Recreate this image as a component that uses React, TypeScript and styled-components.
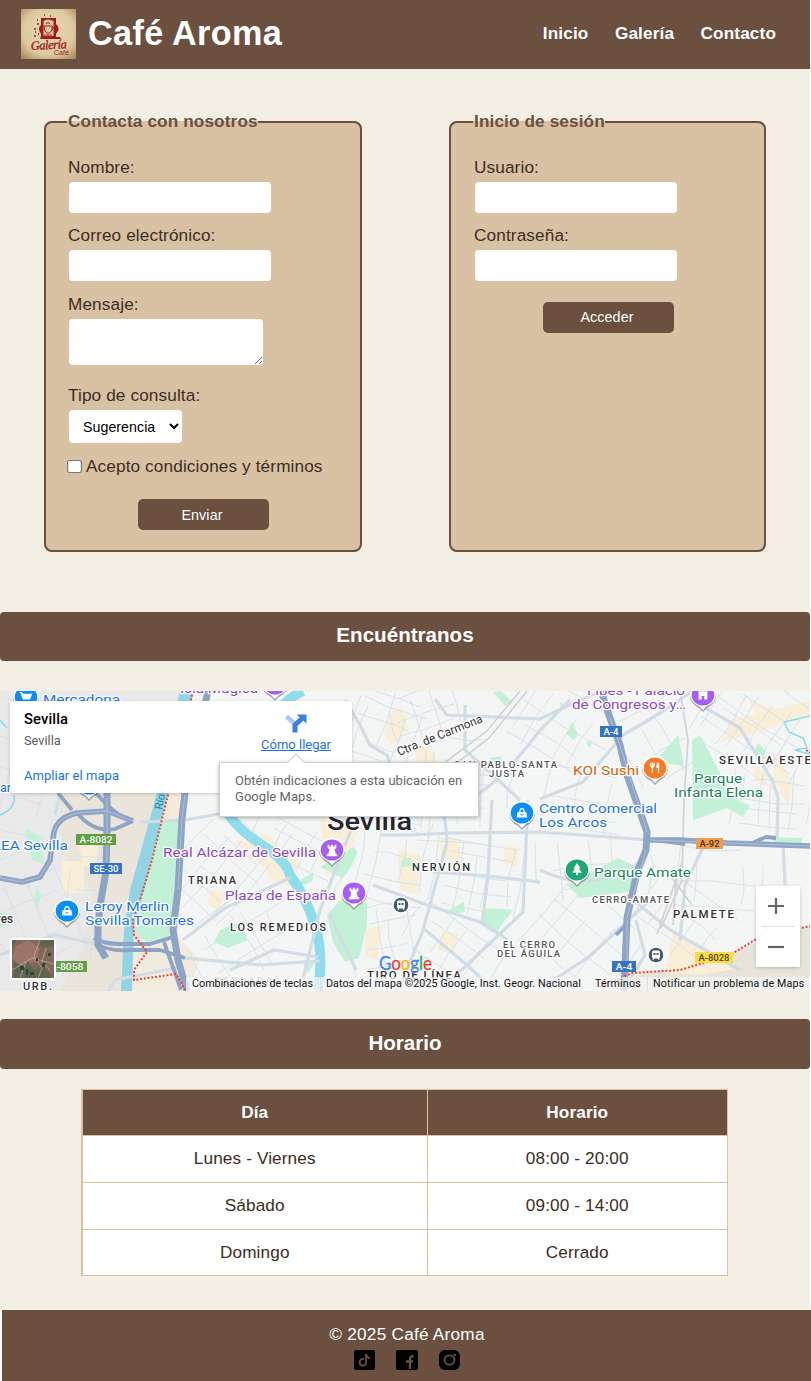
import React from "react";
import styled, { createGlobalStyle } from "styled-components";

const c = {
  brown: "#6b4f3f",
  tan: "#d9c2a3",
  cream: "#f4efe4",
  ink: "#3e2c23",
};

const GlobalStyle = createGlobalStyle`
  *, *::before, *::after { box-sizing: border-box; }
  body {
    margin: 0;
    background: #fff;
    color: ${c.ink};
    font-family: "Liberation Sans", Arial, sans-serif;
    font-size: 17.2px;
    letter-spacing: 0.12px;
    line-height: 18px;
  }
`;

const Page = styled.div`
  display: flex;
  flex-direction: column;
  width: 810px;
  height: 1381px;
  background: ${c.cream};
`;

const Header = styled.header`
  display: flex;
  align-items: center;
  justify-content: space-between;
  height: 69px;
  padding: 0 34px 1px 21px;
  background: ${c.brown};
  color: #fff;
`;

const Brand = styled.div`
  display: flex;
  align-items: center;
  gap: 12px;
  svg { display: block; }
`;

const BrandName = styled.h1`
  margin: 0 0 3px;
  font-size: 34.2px;
  line-height: 38px;
  letter-spacing: 0.35px;
`;

const Nav = styled.nav`
  display: flex;
  gap: 26.5px;
  margin-top: -2px;
`;

const NavLink = styled.a`
  color: #fff;
  font-weight: bold;
  text-decoration: none;
`;

const Forms = styled.main`
  display: flex;
  justify-content: space-between;
  height: 543px;
  padding: 43px 44px 60px;
`;

const Panel = styled.fieldset<{ $w: number; $inset: number }>`
  width: ${(p) => p.$w}px;
  min-width: 0;
  height: 440px;
  margin: 0;
  padding: 26px 21px 0 ${(p) => p.$inset}px;
  background: ${c.tan};
  border: 2px solid ${c.brown};
  border-radius: 8px;
`;

const Legend = styled.legend`
  padding: 0 0 2px 1px;
  color: ${c.brown};
  font-weight: bold;
`;

const Field = styled.label<{ $gap?: number }>`
  display: flex;
  flex-direction: column;
  align-items: flex-start;
  gap: 5.6px;
  margin-bottom: ${(p) => p.$gap ?? 13.8}px;
  padding-left: 1px;
`;

const Input = styled.input`
  width: 202px;
  height: 31px;
  margin-left: 1px;
  padding: 0 8px;
  border: 0;
  border-radius: 4px;
  background: #fff;
`;

const TextArea = styled.textarea`
  width: 194px;
  height: 46px;
  margin: 0.5px 0 0 1px;
  padding: 8px;
  border: 0;
  border-radius: 4px;
  background: #fff;
`;

const Select = styled.select`
  width: 113px;
  height: 33px;
  margin: 0.4px 0 0 1px;
  padding: 0 0 0 10px;
  border: 0;
  border-radius: 4px;
  background: #fff;
  color: #000;
  font: 14.2px "Liberation Sans", Arial, sans-serif;
  letter-spacing: 0.05px;
`;

const Check = styled.label`
  display: flex;
  align-items: center;
  gap: 5px;
  padding-left: 1px;
  white-space: nowrap;
  input { width: 13px; height: 13px; margin: 0; transform: scaleX(1.15); }
`;

const Button = styled.button<{ $top: number }>`
  display: block;
  width: 131px;
  height: 31px;
  margin: ${(p) => p.$top}px auto 0;
  padding: 0 8px 0 6px;
  border: 0;
  border-radius: 5px;
  background: ${c.brown};
  color: #fff;
  font: 14.3px "Liberation Sans", Arial, sans-serif;
  letter-spacing: 0.1px;
`;

const SectionTitle = styled.h2<{ $h?: number }>`
  display: flex;
  align-items: center;
  justify-content: center;
  height: ${(p) => p.$h ?? 49}px;
  margin: 0;
  padding-bottom: 3px;
  border-radius: 4px;
  background: ${c.brown};
  color: #fff;
  font-size: 20.6px;
  letter-spacing: 0;
`;

const MapFrame = styled.section`
  position: relative;
  height: 300px;
  margin: 30px 0 28px;
  overflow: hidden;
  font-family: Roboto, sans-serif;
  letter-spacing: 0;
  > svg { display: block; }
`;

const InfoCard = styled.div`
  position: absolute;
  left: 10px;
  top: 10px;
  display: flex;
  justify-content: space-between;
  width: 342px;
  height: 92px;
  padding: 9px 21px 0 14px;
  background: #fff;
  border-radius: 2px;
  box-shadow: 0 1px 4px -1px rgba(0, 0, 0, 0.3);
`;

const Place = styled.div`
  display: flex;
  flex-direction: column;
  font-size: 12.8px;
  line-height: 18px;
  color: #5b5b5b;
  strong { font-size: 14.8px; font-weight: 500; color: #000; letter-spacing: 0.1px; }
  span { margin-top: 4px; }
  a { margin-top: 17px; color: #1a73e8; font-size: 13px; letter-spacing: 0.05px; }
`;

const Directions = styled.a`
  display: flex;
  flex-direction: column;
  align-items: center;
  color: #1a73e8;
  font-size: 13px;
  line-height: 18px;
  text-decoration: underline;
  svg { margin: 4px 0 3px; }
`;

const Tooltip = styled.div`
  position: absolute;
  left: 219px;
  top: 71px;
  width: 260px;
  height: 55px;
  padding: 10px 15px;
  background: #fff;
  border: 1px solid #cfcfcf;
  box-shadow: 0 1px 4px rgba(0, 0, 0, 0.3);
  color: #666;
  font-size: 13px;
  line-height: 16px;
  letter-spacing: 0.04px;
  white-space: nowrap;
  &::before {
    content: "";
    position: absolute;
    left: 70px;
    top: -7px;
    width: 12px;
    height: 12px;
    background: #fff;
    border: 1px solid #cfcfcf;
    border-width: 1px 0 0 1px;
    transform: rotate(45deg);
  }
`;

const Zoom = styled.div`
  position: absolute;
  left: 756px;
  top: 195px;
  display: flex;
  flex-direction: column;
  width: 44px;
  height: 81px;
  background: #fff;
  box-shadow: 0 1px 4px -1px rgba(0, 0, 0, 0.35);
`;

const ZoomButton = styled.button`
  flex: 1;
  display: grid;
  place-items: center;
  margin: 0 5px;
  padding: 0 4px 0 0;
  border: 0;
  background: none;
  & + & { border-top: 1px solid #e2e2e2; }
`;

const Attribution = styled.div`
  position: absolute;
  right: 0;
  bottom: 0;
  display: flex;
  align-items: center;
  height: 14px;
  padding-right: 6px;
  background: rgba(245, 245, 245, 0.74);
  color: #111;
  font-size: 10.7px;
  line-height: 14px;
  white-space: nowrap;
`;

const Credit = styled.span<{ $w: number; $ls?: number; $line?: boolean }>`
  width: ${(p) => p.$w}px;
  padding-left: ${(p) => (p.$line ? 5 : 6)}px;
  letter-spacing: ${(p) => p.$ls ?? 0.05}px;
  border-left: ${(p) => (p.$line ? "1px solid #ddd" : "0")};
`;

const Schedule = styled.table`
  width: 647px;
  margin: 20px 0 0 81px;
  border-collapse: collapse;
  table-layout: fixed;
  background: #fff;
  text-align: center;
  td, th { padding: 0 0 2px; height: 47px; border: 1px solid ${c.tan}; }
  th { height: 46px; background: ${c.brown}; color: #fff; }
  tr:last-child td { height: 46px; }
  td:first-child, th:first-child { width: 345px; border-left-width: 2px; }
`;

const Footer = styled.footer`
  display: flex;
  flex-direction: column;
  align-items: center;
  gap: 7px;
  width: 811px;
  height: 71px;
  margin-top: auto;
  padding: 15px 0 0 1px;
  background: ${c.brown};
  border-left: 2px solid #fff;
  color: #fff;
  letter-spacing: 0.25px;
`;

const Social = styled.div`
  display: flex;
  gap: 21px;
  svg { display: block; }
`;

const Logo = () => (
  <svg width="55" height="50" viewBox="0 0 55 50">
    <defs>
      <radialGradient id="paper" cx=".5" cy=".45" r=".72">
        <stop offset="0" stopColor="#e9dbb9" />
        <stop offset=".65" stopColor="#dcc9a0" />
        <stop offset="1" stopColor="#a9885c" />
      </radialGradient>
    </defs>
    <rect width="55" height="50" fill="url(#paper)" />
    <path d="M20 9h15v19h4l1 2H19l1-3z" fill="#a3191c" />
    <path d="M20 16q-4 3 0 9M35 15q5 4 0 10" fill="#a3191c" />
    <path d="M22.500 12q4-3 10 0v15h-10z" fill="#ddcaa2" />
    <path d="M23 17h8v4q-4 6-7 1zM31 18q3 0 0 3M25 15q2-3 4 0M23 26h8" fill="none" stroke="#a3191c" strokeWidth="1" />
    <path d="M23 6h1M29 7h1M16 15h2M13 20h2M14 23h1M17 25h1M13 27h2M16 11h1" stroke="#a3191c" strokeWidth="1.500" />
    <text x="10" y="40" fill="#a3191c" fontFamily="Liberation Serif, serif" fontStyle="italic" fontSize="12.500" letterSpacing="0" textLength="36" stroke="#a3191c" strokeWidth=".35" transform="rotate(-3 28 40)">Galería</text>
    <text x="33" y="46" fill="#a3191c" fontFamily="Liberation Sans, sans-serif" fontSize="7" letterSpacing="0" textLength="15">Café</text>
  </svg>
);

type Pt = [number, number];

/* Irregular street grids, one per district: centre, half size, angle, spacing. */
const districts: [number, number, number, number, number, number][] = [
  [25, 770, 50, 70, 15, 34], [25, 915, 60, 60, -22, 27], [85, 900, 20, 60, 6, 24],
  [215, 880, 38, 60, 42, 18], [250, 940, 55, 34, -32, 23], [298, 850, 45, 25, 28, 18],
  [385, 730, 40, 38, 20, 17], [425, 720, 35, 30, -18, 22], [395, 860, 40, 45, 12, 21],
  [460, 800, 45, 55, 4, 23], [480, 880, 45, 40, 10, 18], [390, 940, 35, 40, -10, 21],
  [460, 955, 55, 30, 35, 23], [560, 730, 50, 40, 32, 26], [570, 800, 55, 34, 10, 28],
  [585, 865, 50, 32, -6, 28], [580, 940, 50, 45, 40, 24], [660, 740, 38, 40, -30, 26],
  [755, 730, 60, 45, 33, 16], [770, 800, 40, 34, 6, 15], [710, 880, 65, 35, 4, 30],
  [690, 930, 55, 38, 36, 26],
];

const streetPath = () => {
  let seed = 7;
  const rnd = () => {
    seed = (seed * 16807) % 2147483647;
    return seed / 2147483647 - 0.5;
  };
  let d = "";
  districts.forEach(([cx, cy, w, h, deg, gap]) => {
    const a = (deg * Math.PI) / 180;
    const put = (x: number, y: number): Pt => [
      Math.round(cx + x * Math.cos(a) - y * Math.sin(a)),
      Math.round(cy + x * Math.sin(a) + y * Math.cos(a)),
    ];
    for (let x = -w; x <= w; x += gap) {
      const j = rnd() * gap * 0.7;
      d += `M${put(x + j, -h * (0.7 + rnd() * 0.6))}L${put(x + j + rnd() * 6, rnd() * 20)}L${put(x + j, h * (0.7 + rnd() * 0.6))}`;
    }
    for (let y = -h; y <= h; y += gap) {
      const j = rnd() * gap * 0.7;
      d += `M${put(-w * (0.7 + rnd() * 0.6), y + j)}L${put(rnd() * 20, y + j + rnd() * 6)}L${put(w * (0.7 + rnd() * 0.6), y + j)}`;
    }
  });
  return d;
};
const streets = streetPath();

type LabelProps = { x: number; y: number; w?: number; s?: number; fill?: string; weight?: number; children: string; rot?: number; spaced?: boolean };
const Label = ({ x, y, w, s = 13.7, fill = "#1a73e8", weight = 400, rot, spaced, children }: LabelProps) => (
  <text x={x} y={y} textLength={w} lengthAdjust={spaced ? "spacing" : "spacingAndGlyphs"} fontSize={s} fill={fill} fontWeight={weight} stroke="#fff" strokeWidth="2.500"
    strokeLinejoin="round" paintOrder="stroke" transform={rot ? `rotate(${rot} ${x} ${y})` : undefined}>{children}</text>
);

const Shield = ({ x, y, w, fill, ink = "#fff", children }: { x: number; y: number; w: number; fill: string; ink?: string; children: string }) => (
  <g>
    <rect x={x} y={y} width={w} height="11" fill={fill} />
    <text x={x + w / 2} y={y + 9} textAnchor="middle" textLength={w - 7} lengthAdjust="spacingAndGlyphs" fontSize="9.500" fontWeight="500" fill={ink}>{children}</text>
  </g>
);

const glyphs: Record<string, React.ReactNode> = {
  cart: <path d="M-7-5h2l1 2h10l-2 5h-7l-2-5M-3 5h1M3 5h1" fill="#fff" stroke="#fff" strokeWidth="1.500" />,
  bag: <><path d="M-5-1h10l1 6H-6z" fill="#fff" /><path d="M-2.500-1q0-4 2.500-4t2.500 4" fill="none" stroke="#fff" strokeWidth="1.400" /><path d="M-2 1.500q2 2 4 0" fill="none" stroke="#0b8ff5" /></>,
  tower: <path d="M-5-6h2v2h2v-2h2v2h2v-2h2v4l-2 1 1 5 2 1v2H-6v-2l2-1 1-5-2-1z" fill="#fff" />,
  gate: <path d="M-5-5h2v1h2v-2h2v2h2v-1h2V5H1.500V1h-3v4H-5z" fill="#fff" />,
  fork: <path d="M-5-6v3q0 2 2 2.500v6M-1-6v3q0 2-2 2.500M-3-6v5M4-6v12M3.500-6q-2 3-1 6" fill="none" stroke="#fff" strokeWidth="1.500" />,
  tree: <path d="M0-8l4 6H2l3.500 5H1v3h-2V3h-4.500l3.500-5h-2z" fill="#fff" />,
};

const Pin = ({ x, y, fill, glyph }: { x: number; y: number; fill: string; glyph: string }) => (
  <g transform={`translate(${x} ${y})`}>
    <path d="M-13 1A13 12.500 0 1 1 13 1Q12 8 4 12L0 16-4 12Q-12 8-13 1z" fill="#666" opacity=".55" transform="translate(0 1)" />
    <path d="M-13 0A13 12.500 0 1 1 13 0Q12 8 4 11L0 15-4 11Q-12 8-13 0z" fill="#fff" />
    <ellipse rx="11.300" ry="10.500" fill={fill} />
    <g transform="scale(.88)">{glyphs[glyph]}</g>
  </g>
);

const Station = ({ x, y }: { x: number; y: number }) => (
  <g transform={`translate(${x} ${y})`}>
    <circle r="8.500" fill="#fff" />
    <circle r="7.300" fill="#455a72" />
    <rect x="-4" y="-4.500" width="8" height="8" rx="1.500" fill="#fff" />
    <path d="M-2.500-2h2v2h-2zM.5-2h2v2h-2z" fill="#455a72" />
    <path d="M-3 5l1-2M3 5l-1-2" stroke="#fff" />
  </g>
);

const CityMap = () => (
  <svg width="810" height="300" viewBox="0 691 810 300" fontFamily="Roboto, sans-serif">
    <rect y="691" width="810" height="300" fill="#f4f5f5" />
    <path d="M0 691H190L150 830 128 991H0z" fill="#e9e9e9" />
    <path d="M60 793H182L176 991H60L82 950 92 890 62 850z" fill="#e9e5da" />
    <path d="M135 940L176 935 200 960 188 991H130z" fill="#f2ecdf" />
    <path d="M170 793h14l-4 26-24 5z" fill="#f5ebda" />
    <path d="M600 991L645 972 700 965 750 945 770 935 811 926V991z" fill="#e8e4da" />
    <g fill="#f9efd9">
      <path d="M665 973l8-40 30 12 30 24-30 6z" />
      <path d="M245 843l20-10 35 30-8 25-20-8z M235 840l26 4-10 18z M320 820l40 5-10 30-25 5z M330 855l25-8 0 20-30 8z" />
      <path d="M387 715l14-8 8 22-14 16-10-6z M415 745l18 4 7 20-24-2z M398 850l26 6-8 38-16-4z M440 837l20 2v22l-18-2z M365 930l18-6-6 36-12-4z M290 700l16 30-10 12z" />
      <path d="M720 742l10-22 82-20v14l-60 20z M772 750l20 30-4 26-12-22z M755 765l12 10-2 12-12-8z M748 700l26 8 6 16-22-6z" />
      <path d="M62 861h22v32H62z M46 700l16 8-4 18z M78 845l20-4-2 26H84z M210 890l15 4-6 16-12-5z M442 930l16 4-4 20-16-4z M505 845l14 3-2 18-14-2z" />
    </g>
    <path d={streets} fill="none" stroke="#d3dee7" strokeWidth=".85" />
    <g fill="#c3f1d7">
      <path d="M160 822L180 817 178 852 173 918 167 938 147 942 135 932 138 912z" />
      <path d="M327 915L342 898 367 903 367 925 359 958 345 962 333 942z M320 867L353 847 358 852 348 872 343 878z M402 860l8-3 2 9-11 1z" />
      <path d="M485 908l28 2-18 24-14-9z M449 910l15-8 1 10-10 2z M300 880l14-8-2 10-12 4z M493 692l8-1 12 12-8 3z M490 758l12-2-4 10z" />
      <path d="M700 735L725 783 740 802 750 805 743 817 727 808 705 816 693 820 692 740z M678 735L655 762 684 766z M567 885L618 858 637 867 628 892 580 898z" />
      <path d="M572 722l6 12-4 6-8-6z M586 742l6-2-2 8z M560 702l6 4-5 5z M770 837l32 1v5l-28-1z M758 743l8 8-3 6-10-4z" />
      <path d="M220 930l20-8 8 18-20 8-14-6z M25 828l14 8 5 28-12-4z M36 889l6 4-5 14-3-6z M302 960l12 3-6 10z M0 912l12 2-2 12H0z" />
    </g>
    <path d="M180 691L157 793 130 890 124 930 121 991H132L134 925 145 885 168 793 194 691z" fill="#92d4e6" />
    <path d="M303 691Q290 697 282 706M227 812Q238 830 262 845T290 875Q306 897 315 925T318 991" fill="none" stroke="#8fdcec" strokeWidth="10" />
    <path d="M810 716l-26 6 5 10 14 6 4 10-12 2 14 4M0 815q16-6 14-20M0 720l7 8" fill="none" stroke="#86dcec" strokeWidth="1.500" />
    <g fill="none" stroke="#d2dce5" strokeWidth="3.200">
      <path d="M345 700L360 725 370 745 387 755 395 780M380 835L410 835 450 833 540 832 650 840M351 830L320 910 300 991M373 885L427 905 483 923 508 940M433 775Q450 830 446 846L423 930 398 991M423 928L467 965 492 988" />
      <path d="M433 872L488 876 540 882M492 800L488 875 482 925M528 800L523 912 467 965 440 988M449 800Q480 810 540 730L570 700M435 699L447 715 540 719 600 691M465 705V750L520 800M540 799L583 782 623 735 673 705 692 691M692 700L740 728 773 782 778 798 777 838M783 842L785 885M540 870Q580 890 628 872L647 855" />
      <path d="M318 957L274 950 230 970M183 940L225 908 290 878M185 958L260 965 320 961M330 915L356 970M140 822L185 820 230 812M540 989L590 956 650 900M627 895L670 930 740 970M98 945L55 935 0 955M108 991L115 980 180 967M55 815L60 795M636 920L645 955 627 985M704 845L685 885 680 940" />
    </g>
    <path d="M527 691L489 738 422 790M520 691L487 731 420 781M680 691L688 740 684 800 682 880 661 928M683 860L657 934M676 880L673 925M670 875L692 905" stroke="#cfd2d7" strokeWidth="1.700" fill="none" />
    <g fill="none" stroke="#8ea4c5" strokeWidth="7" strokeLinejoin="round">
      <path d="M208 691L185 793 182 818 178 890 173 930 178 960 187 991M107 793L107 830 106 872 101 900 98 925 98 945 106 958M601 691L610 718 620 745 627 775 647 832 646 850 637 872 627 918 624 991" />
      <path d="M0 878L22 882 40 877 50 860 54 832Q58 817 77 813L107 811 133 821M647 840L680 840 727 843 811 846" strokeWidth="5.500" />
      <path d="M77 813Q94 833 115 829L133 821M96 793Q110 810 126 819M58 793L72 810M94 938Q104 944 120 944L150 944 173 937M95 943Q109 952 130 950L160 950 185 958M164 942L181 990M618 730L622 758M626 925L616 935M655 840L685 844M750 844L766 837 776 838" strokeWidth="3.800" />
    </g>
    <path d="M0 878L22 882 40 877 50 860 54 832Q58 817 77 813L107 811 133 821M107 798V872M185 795L182 818 178 890M610 718L620 745 647 832M646 850L627 918V990M650 840L811 846" fill="none" stroke="#b2c0d8" strokeWidth="1" />
    <path d="M193 691L168 795 152 860 140 900 133 920 134 935 147 952 134 970 134 980 176 974 186 991M600 987L632 973 680 970 730 955 755 940 790 930 811 926M806 750l5 3" fill="none" stroke="#ea4335" strokeWidth="2" strokeDasharray="2 1.800" />

    <Pin x={26} y={697} fill="#0b8ff5" glyph="cart" />
    <Pin x={89} y={784} fill="#0b8ff5" glyph="bag" />
    <Pin x={275} y={684} fill="#a75cf5" glyph="tower" />
    <Pin x={332} y={850} fill="#a75cf5" glyph="tower" />
    <Pin x={354} y={893} fill="#a75cf5" glyph="tower" />
    <Pin x={67} y={911} fill="#0b8ff5" glyph="bag" />
    <Pin x={522} y={813} fill="#0b8ff5" glyph="bag" />
    <Pin x={655} y={768} fill="#fb7b24" glyph="fork" />
    <Pin x={703} y={695} fill="#a75cf5" glyph="gate" />
    <Pin x={577} y={870} fill="#1ba873" glyph="tree" />
    <Station x={401} y={905} />
    <Station x={656} y={955} />

    <Label x={43} y={704} w={77}>Mercadona</Label>
    <Label x={180} y={693} w={78} fill="#8746d6">Isla Mágica</Label>
    <Label x={-36} y={792} w={47}>Aldemar</Label>
    <Label x={-13} y={850} w={81}>IKEA Sevilla</Label>
    <Label x={163} y={857} w={153} fill="#8746d6">Real Alcázar de Sevilla</Label>
    <Label x={225} y={900} w={111} fill="#8746d6">Plaza de España</Label>
    <Label x={85} y={911} w={84}>Leroy Merlin</Label>
    <Label x={85} y={925} w={109}>Sevilla Tomares</Label>
    <Label x={539} y={813} w={118}>Centro Comercial</Label>
    <Label x={539} y={827} w={68}>Los Arcos</Label>
    <Label x={573} y={775} w={66} fill="#d5610a">KOI Sushi</Label>
    <Label x={587} y={695} w={98} fill="#8746d6">Fibes - Palacio</Label>
    <Label x={572} y={709} w={114} fill="#8746d6">de Congresos y…</Label>
    <Label x={694} y={783} w={48} fill="#188058">Parque</Label>
    <Label x={674} y={797} w={89} fill="#188058">Infanta Elena</Label>
    <Label x={594} y={877} w={97} fill="#188058">Parque Amate</Label>
    <Label x={327} y={830} w={85} s={25} weight={500} fill="#24272b">Sevilla</Label>
    <Label x={188} y={884} w={48} s={11} weight={500} fill="#333" spaced>TRIANA</Label>
    <Label x={230} y={931} w={96} s={11} weight={500} fill="#333" spaced>LOS REMEDIOS</Label>
    <Label x={412} y={871} w={58} s={11} weight={500} fill="#333" spaced>NERVIÓN</Label>
    <Label x={367} y={979} w={94} s={11.500} weight={500} fill="#333" spaced>TIRO DE LÍNEA</Label>
    <Label x={214} y={985} w={59} s={11.500} weight={500} fill="#999" spaced>TABLADA</Label>
    <Label x={23} y={990} w={29} s={11} weight={500} fill="#333" spaced>URB.</Label>
    <Label x={-20} y={923} w={33} s={12} weight={500} fill="#333">Mares</Label>
    <Label x={454} y={768} w={103} s={9.500} weight={500} fill="#555" spaced>SAN PABLO-SANTA</Label>
    <Label x={489} y={777} w={35} s={9.500} weight={500} fill="#555" spaced>JUSTA</Label>
    <Label x={503} y={948} w={52} s={9.500} weight={500} fill="#555" spaced>EL CERRO</Label>
    <Label x={497} y={957} w={63} s={9.500} weight={500} fill="#555" spaced>DEL ÁGUILA</Label>
    <Label x={592} y={903} w={77} s={9.500} weight={500} fill="#555" spaced>CERRO-AMATE</Label>
    <Label x={673} y={918} w={61} s={11.500} weight={500} fill="#333" spaced>PALMETE</Label>
    <Label x={719} y={764} w={92} s={11.500} weight={500} fill="#333" spaced>SEVILLA ESTE</Label>
    <Label x={399} y={756} w={91} s={12} fill="#333" rot={-22}>Ctra. de Carmona</Label>
    <text x="162" y="810" fontSize="11" fill="#16869a" transform="rotate(-78 162 810)">Río</text>

    <Shield x={76} y={834} w={40} fill="#5fa044">A-8082</Shield>
    <Shield x={90} y={863} w={32} fill="#3573c5">SE-30</Shield>
    <Shield x={46} y={961} w={41} fill="#5fa044">A-8058</Shield>
    <Shield x={600} y={726} w={22} fill="#3573c5">A-4</Shield>
    <Shield x={612} y={961} w={24} fill="#3573c5">A-4</Shield>
    <Shield x={696} y={838} w={27} fill="#ed9d4c" ink="#4b3212">A-92</Shield>
    <Shield x={695} y={952} w={38} fill="#fddb3a" ink="#4b4212">A-8028</Shield>

    <rect x="10" y="938" width="46" height="42" rx="2" fill="#fff" />
    <rect x="12" y="940" width="42" height="38" fill="#80675a" />
    <path d="M16 946l12-6 12 8-4 14-16 4-8-8z" fill="#9c7468" />
    <path d="M14 962l8 4 6-5 6 9 10-4 6 8v4H14zM38 940l4 8 12-2v-6zM12 940h5l-5 8z" fill="#5d6450" />
    <path d="M40 940l-6 16 8 12-4 10M12 970l20-12 22 6M20 978l6-16M46 948l-4 14 8 8" fill="none" stroke="#c9b8a4" strokeWidth="1" opacity=".65" />
    <path d="M48 953h3v3h-3zM30 972h4v3h-4zM42 963h3v4h-3zM20 966h4v4h-4zM26 969h2v6h-2zM36 958h2v3h-2z" fill="#364033" />

    <text x="379" y="970" fontFamily="Lato, sans-serif" fontSize="18.500" textLength="53" lengthAdjust="spacingAndGlyphs" strokeWidth=".3">
      <tspan fill="#4285f4" stroke="#4285f4">G</tspan><tspan fill="#ea4335" stroke="#ea4335">o</tspan><tspan fill="#fbbc04" stroke="#fbbc04">o</tspan><tspan fill="#4285f4" stroke="#4285f4">g</tspan><tspan fill="#34a853" stroke="#34a853">l</tspan><tspan fill="#ea4335" stroke="#ea4335">e</tspan>
    </text>
  </svg>
);

const DirectionsIcon = () => (
  <svg width="22" height="19" viewBox="0 0 22 19">
    <path d="M1.500 2.500L9.500 9.500" stroke="#a6c8fb" strokeWidth="4.500" />
    <path d="M10 18.500V11L17 4.500" fill="none" stroke="#3880dc" strokeWidth="5" />
    <path d="M11.500 .5H21.500V9.500z" fill="#3880dc" />
  </svg>
);

const TikTok = () => (
  <svg width="21" height="20" viewBox="0 0 21 20">
    <rect width="21" height="20" rx="2" />
    <path d="M10 9q-4-.5-4.300 3.200T9 15.500 12 12V4q1 4 4 4" fill="none" stroke={c.brown} strokeWidth="1.900" />
  </svg>
);

const Facebook = () => (
  <svg width="22" height="20" viewBox="0 0 22 20">
    <rect width="22" height="20" rx="2" />
    <path d="M14 19V9Q14 6 17.500 6.300M10 11.500h7" fill="none" stroke={c.brown} strokeWidth="2.300" />
  </svg>
);

const Instagram = () => (
  <svg width="21" height="20" viewBox="0 0 21 20">
    <rect width="21" height="20" rx="6" />
    <ellipse cx="10.500" cy="10" rx="5" ry="4.600" fill="none" stroke={c.brown} strokeWidth="1.800" />
    <circle cx="15.800" cy="4.900" r="1.200" fill={c.brown} />
  </svg>
);

const hours = [
  ["Lunes - Viernes", "08:00 - 20:00"],
  ["Sábado", "09:00 - 14:00"],
  ["Domingo", "Cerrado"],
];

export default function App() {
  return (
    <>
      <GlobalStyle />
      <Page>
        <Header>
          <Brand>
            <Logo />
            <BrandName>Café Aroma</BrandName>
          </Brand>
          <Nav>
            <NavLink>Inicio</NavLink>
            <NavLink>Galería</NavLink>
            <NavLink>Contacto</NavLink>
          </Nav>
        </Header>

        <Forms>
          <Panel $w={318} $inset={21}>
            <Legend>Contacta con nosotros</Legend>
            <Field>Nombre:<Input /></Field>
            <Field>Correo electrónico:<Input /></Field>
            <Field $gap={21.4}>Mensaje:<TextArea /></Field>
            <Field $gap={14}>
              Tipo de consulta:
              <Select defaultValue="s"><option value="s">Sugerencia</option></Select>
            </Field>
            <Check><input type="checkbox" />Acepto condiciones y términos</Check>
            <Button $top={24}>Enviar</Button>
          </Panel>
          <Panel $w={317} $inset={22}>
            <Legend>Inicio de sesión</Legend>
            <Field>Usuario:<Input /></Field>
            <Field $gap={0}>Contraseña:<Input type="password" /></Field>
            <Button $top={21}>Acceder</Button>
          </Panel>
        </Forms>

        <SectionTitle>Encuéntranos</SectionTitle>
        <MapFrame>
          <CityMap />
          <Attribution>
            <Credit $w={134}>Combinaciones de teclas</Credit>
            <Credit $w={269} $ls={0.11} $line>Datos del mapa ©2025 Google, Inst. Geogr. Nacional</Credit>
            <Credit $w={58} $ls={0.15}>Términos</Credit>
            <Credit $w={157} $ls={0.15} $line>Notificar un problema de Maps</Credit>
          </Attribution>
          <InfoCard>
            <Place>
              <strong>Sevilla</strong>
              <span>Sevilla</span>
              <a>Ampliar el mapa</a>
            </Place>
            <Directions><DirectionsIcon />Cómo llegar</Directions>
          </InfoCard>
          <Tooltip>Obtén indicaciones a esta ubicación en<br />Google Maps.</Tooltip>
          <Zoom>
            <ZoomButton aria-label="Acercar">
              <svg width="16" height="16"><path d="M0 8h16M8 0v16" stroke="#666" strokeWidth="2.200" /></svg>
            </ZoomButton>
            <ZoomButton aria-label="Alejar">
              <svg width="16" height="16"><path d="M0 8h16" stroke="#666" strokeWidth="2.200" /></svg>
            </ZoomButton>
          </Zoom>
        </MapFrame>

        <SectionTitle $h={50}>Horario</SectionTitle>
        <Schedule>
          <thead>
            <tr><th>Día</th><th>Horario</th></tr>
          </thead>
          <tbody>
            {hours.map(([day, time]) => (
              <tr key={day}><td>{day}</td><td>{time}</td></tr>
            ))}
          </tbody>
        </Schedule>

        <Footer>
          © 2025 Café Aroma
          <Social>
            <TikTok />
            <Facebook />
            <Instagram />
          </Social>
        </Footer>
      </Page>
    </>
  );
}
